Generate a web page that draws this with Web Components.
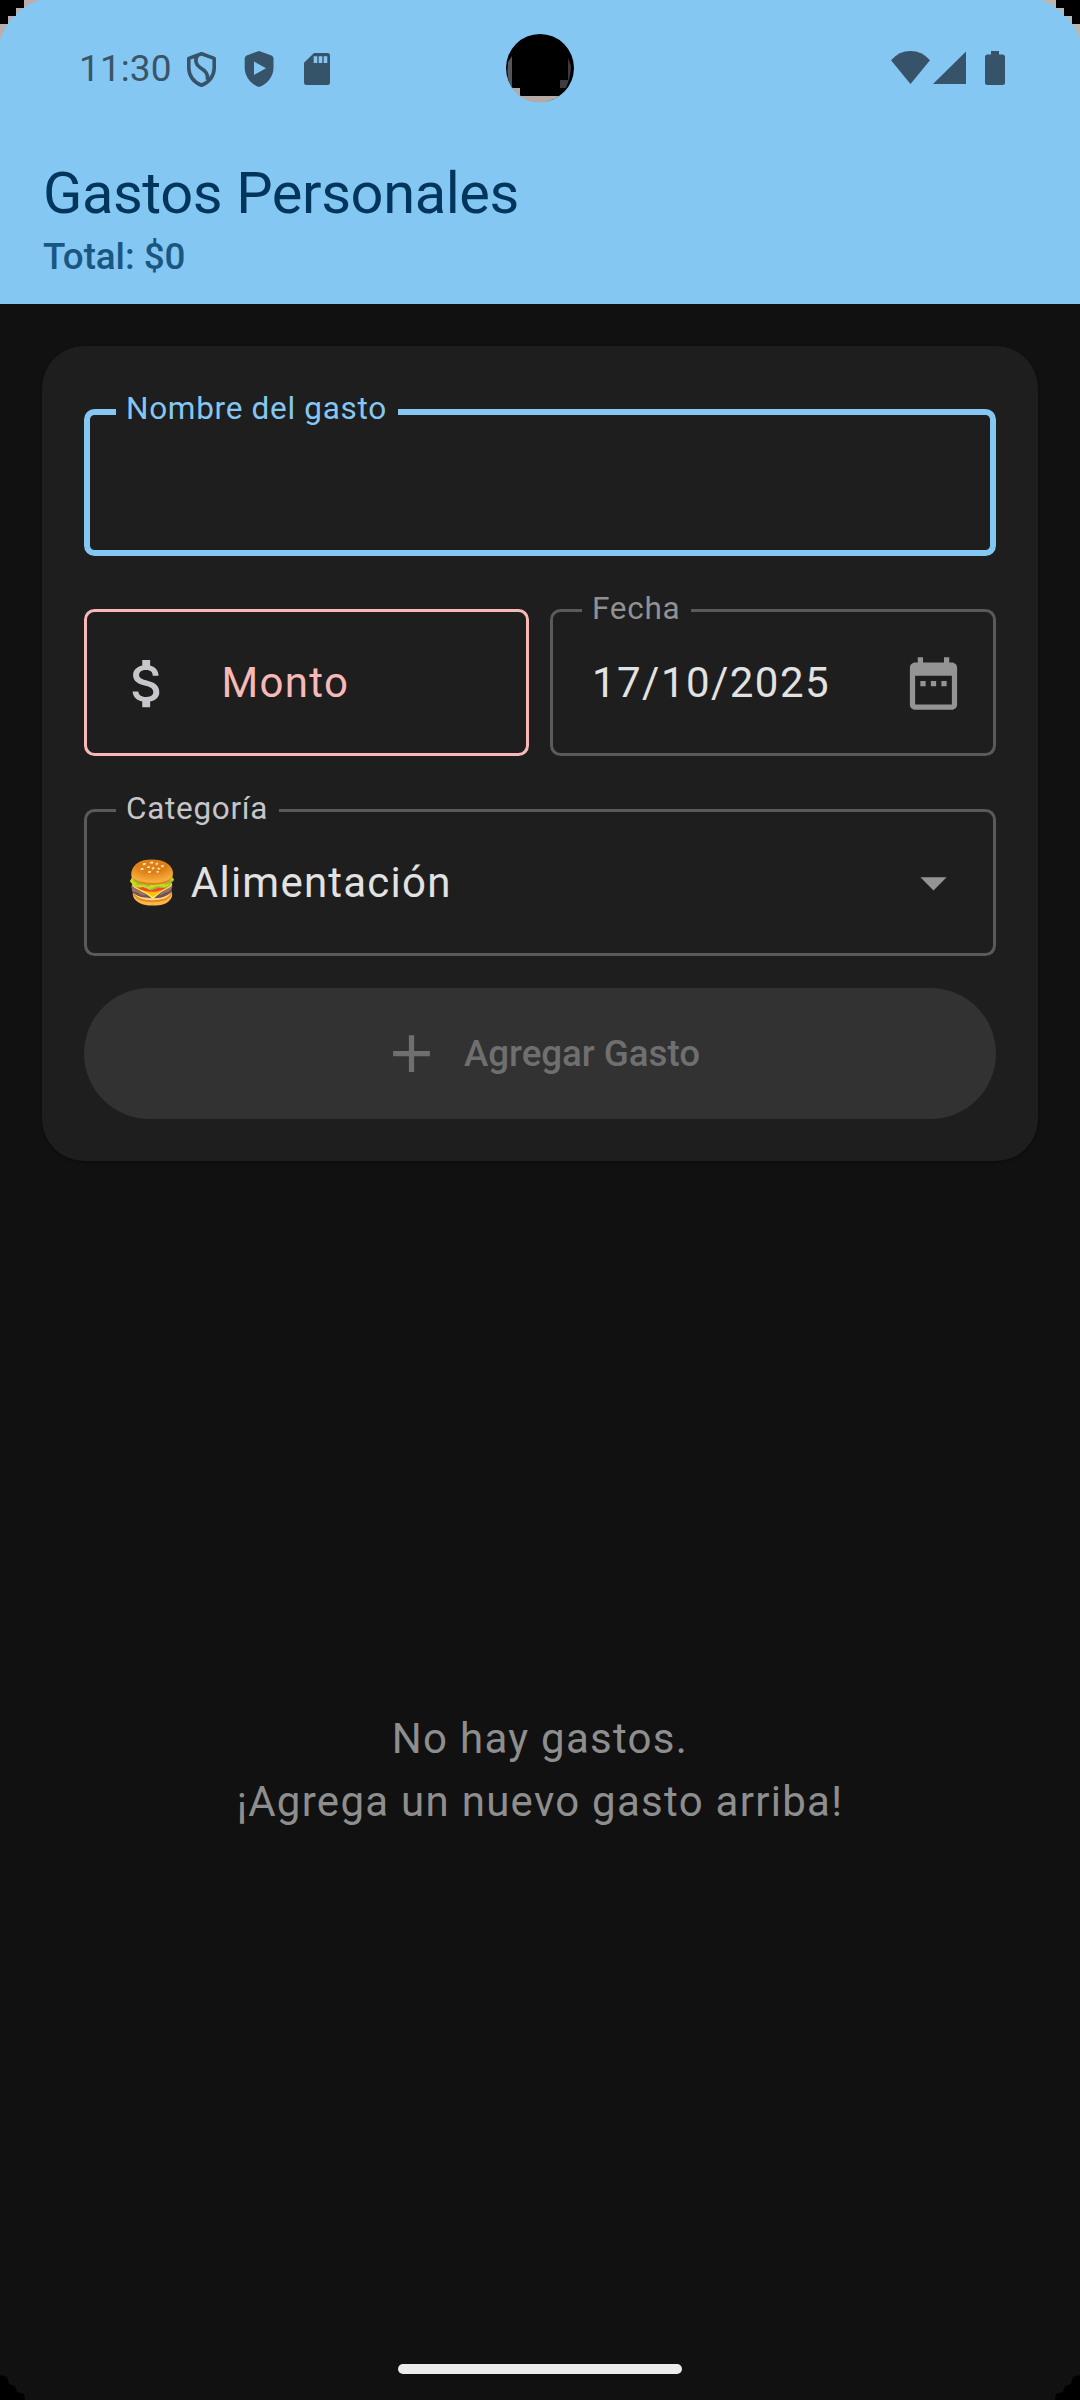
<!DOCTYPE html>
<html lang="es">
<head>
<meta charset="utf-8">
<title>Gastos Personales</title>
<style>
html,body{margin:0;background:#000}
body{font-family:Roboto,"Noto Sans",sans-serif;width:1080px;height:2400px;overflow:hidden}
</style>
</head>
<body>
<gastos-app></gastos-app>
<script>
const define = (name, html) => customElements.define(name, class extends HTMLElement {
  constructor() {
    super();
    const t = document.createElement('template');
    t.innerHTML = html;
    this.attachShadow({mode: 'open'}).append(t.content.cloneNode(true));
  }
});

const ICONS = {
  money: 'M11.8 10.9c-2.27-.59-3-1.2-3-2.15 0-1.09 1.01-1.85 2.7-1.85 1.78 0 2.44.85 2.5 2.1h2.21c-.07-1.72-1.12-3.3-3.21-3.81V3h-3v2.16c-1.94.42-3.5 1.68-3.5 3.61 0 2.31 1.91 3.46 4.7 4.13 2.5.6 3 1.48 3 2.41 0 .69-.49 1.79-2.7 1.79-2.06 0-2.87-.92-2.98-2.1h-2.2c.12 2.19 1.76 3.42 3.68 3.83V21h3v-2.15c1.95-.37 3.5-1.5 3.5-3.55 0-2.84-2.43-3.81-4.7-4.4z',
  date: 'M9 11H7v2h2v-2zm4 0h-2v2h2v-2zm4 0h-2v2h2v-2zm2-7h-1V2h-2v2H8V2H6v2H5c-1.11 0-1.99.9-1.99 2L3 20c0 1.1.89 2 2 2h14c1.1 0 2-.9 2-2V6c0-1.1-.9-2-2-2zm0 16H5V9h14v11z',
  drop: 'M7 10l5 5 5-5z',
  add: 'M19 13h-6v6h-2v-6H5v-2h6V5h2v6h6v2z'
};

customElements.define('md-icon', class extends HTMLElement {
  constructor() {
    super();
    this.attachShadow({mode: 'open'});
  }
  connectedCallback() {
    this.shadowRoot.innerHTML = `<style>:host{display:block;width:63px;height:63px;flex:none}svg{display:block}</style>
      <svg width="63" height="63" viewBox="0 0 24 24" fill="currentColor"><path d="${ICONS[this.getAttribute('name')]}"/></svg>`;
  }
});

define('status-bar', `<style>
:host{display:flex;height:136px;box-sizing:border-box;padding:51px 74px 0 79px;color:#365369;justify-content:space-between;align-items:flex-start}
.l,.r{display:flex;align-items:flex-start}
.time{font-size:37px;line-height:35px;letter-spacing:.1px;width:108px;white-space:nowrap;color:#3b5568}
svg{display:block;overflow:visible}
</style>
<div class="l"><span class="time">11:30</span>
<svg width="150" height="38" viewBox="187 51 150 38">
 <g fill="none" stroke="currentColor" stroke-width="3.6" stroke-linejoin="round"><path d="M201.500 53.700L214.200 58.400V68C214.200 76 209 82.500 201.500 85.200C194 82.500 188.800 76 188.800 68V58.400Z"/><path d="M197.500 55.500C194.500 60 196 65 200 67.500C205 70.500 208.500 73.500 207.500 80"/></g>
 <path fill="currentColor" fill-rule="evenodd" d="M259 51L271.500 55.600Q273.500 56.400 273.500 58.500V67.500C273.500 76.500 267.500 84 259 87C250.500 84 244.700 76.500 244.700 67.500V58.500Q244.700 56.400 246.700 55.600ZM254 61.500V75L266 68.200Z"/>
 <path fill="currentColor" fill-rule="evenodd" d="M314 53H327.500Q330 53 330 55.500V82.500Q330 85 327.500 85H306.500Q304 85 304 82.500V62.800ZM313.700 56.300V63H317.300V56.300ZM318.700 56.300V63H322.300V56.300ZM323.700 56.300V63H327.300V56.300Z"/>
</svg></div>
<svg class="r" width="116" height="36" viewBox="890 51 116 36" fill="currentColor">
 <path d="M891 60.300Q899 51 910.500 51Q922 51 930 60.300L910.500 84Z"/>
 <path d="M966 51.500V84H933Z"/>
 <path d="M991 51H999V54.500H1002.500Q1005 54.500 1005 57V82.500Q1005 85 1002.500 85H987.500Q985 85 985 82.500V57Q985 54.500 987.500 54.500H991Z"/>
</svg>`);

define('app-header', `<style>
:host{display:block;height:304px;background:#85c7f3}
.t{padding:21px 0 0 43px;color:#00355c}
h1{margin:0;font-weight:400;font-size:57.750px;line-height:73.500px;letter-spacing:-.4px}
p{margin:0;font-weight:500;font-size:36.750px;line-height:52.500px;letter-spacing:-.05px;color:#195782}
</style><slot></slot><div class="t"><h1><slot name="title"></slot></h1><p><slot name="sub"></slot></p></div>`);

define('outlined-field', `<style>
:host{display:block;position:relative;height:147px;flex:1;min-width:0;font-size:42px;letter-spacing:var(--ls,1.3125px);color:var(--ink,#e2e2e2)}
fieldset{box-sizing:border-box;position:absolute;inset:var(--top,-16px) 0 0 0;margin:0;padding:0 var(--pad,29px);min-width:0;border:var(--bw,3px) solid var(--line,#5a5a5a);border-radius:10.500px}
legend{display:block;padding:0 11px 0 10px;height:35px;font-size:31.500px;line-height:var(--lh,31px);letter-spacing:.7px;color:var(--label,#919191);white-space:nowrap}
.row{position:relative;display:flex;align-items:center;height:100%;box-sizing:border-box;padding:0 31.500px 0 42px}
.v{flex:1;white-space:pre;line-height:63px}
:host([bare]) fieldset{inset:0}
:host([bare]) legend{display:none}
:host([bare]) .row{padding-left:31.500px;gap:43px}
</style><fieldset><legend><slot name="label"></slot></legend></fieldset>
<div class="row"><slot name="lead"></slot><span class="v"><slot></slot></span><slot name="trail"></slot></div>`);

define('filled-button', `<style>
:host{display:flex;height:131px;border-radius:66px;background:#323232;color:#6f6f70;align-items:center;justify-content:center;gap:21px;font-weight:500;font-size:36.750px;letter-spacing:-.05px}
</style><slot name="icon"></slot><span><slot></slot></span>`);

define('expense-form', `<style>
:host{display:block;box-sizing:border-box;margin:42px 42px 0;height:815px;padding:63px 42px 0;border-radius:42px;background:#1e1e1e;box-shadow:0 1px 3px #0006}
.c{display:flex;flex-direction:column}
.c>*{flex:none}
.row{display:flex;gap:21px;margin:53px 0}
.name{--bw:6px;--top:-14.5px;--lh:28px;--pad:26px;--line:#85c7f3;--label:#85c7f3}
.amt{--line:#f6b9b7;--ink:#f6b9b7;flex:0 0 445px}
.amt md-icon{color:#c8c6ca;margin-top:2px}
.date{--ls:1.45px}
.date md-icon,.cat md-icon{color:#949494}
.date md-icon{margin-top:2px}
.cat{--label:#c6c5c9;--ls:1.22px;margin-bottom:32px}
</style><div class="c">
<outlined-field class="name"><span slot="label">Nombre del gasto</span></outlined-field>
<div class="row">
<outlined-field class="amt" bare><md-icon slot="lead" name="money"></md-icon>Monto</outlined-field>
<outlined-field class="date"><span slot="label">Fecha</span>17/10/2025<md-icon slot="trail" name="date"></md-icon></outlined-field>
</div>
<outlined-field class="cat"><span slot="label">Categoría</span>🍔 Alimentación<md-icon slot="trail" name="drop"></md-icon></outlined-field>
<filled-button><md-icon slot="icon" name="add"></md-icon>Agregar Gasto</filled-button>
</div>`);

define('empty-state', `<style>
:host{flex:1;display:flex;align-items:center;justify-content:center;padding-top:42px;text-align:center;font-size:42px;line-height:63px;letter-spacing:1.28px;color:#8e8e8e}
p{margin:0}
</style><p><slot></slot></p>`);

define('device-cutouts', `<style>
:host{position:absolute;inset:0;pointer-events:none}
svg{display:block}
</style><svg width="1080" height="2400" viewBox="0 0 1080 2400">
<g><path fill="#b9aeab" d="M0 0H40Q10 10 0 40Z"/><path d="M0 0H24V8H16V16H8V24H0Z"/></g>
<g transform="translate(1080 0) scale(-1 1)"><path fill="#b9b7b0" d="M0 0H40Q10 10 0 40Z"/><path d="M0 0H24V8H16V16H8V24H0Z"/></g>
<circle cx="540" cy="68" r="34"/>
<path fill="#b5aaa5" d="M512 88H520V96H560L565 91Q555 102 540 102.500Q522 102 512 88Z"/>
<path fill="#56555b" d="M508 62L512 56V88Q507 80 507.500 70Z"/>
<path fill="#3d3a40" d="M568 58L571 66Q571 76 566 88H560V80H568Z"/>
<path d="M0 2375L7 2377L9 2384L15 2386L17 2392L24 2394L25 2400H0ZM1080 2375L1073 2377L1071 2384L1065 2386L1063 2392L1056 2394L1055 2400H1080Z"/>
</svg>`);

define('gastos-app', `<style>
:host{display:flex;flex-direction:column;position:relative;width:1080px;height:2400px;background:#111;overflow:hidden}
.nav{height:63px;flex:none;display:flex;justify-content:center;align-items:flex-start;box-sizing:border-box;padding-top:27px}
.nav i{width:284px;height:10px;border-radius:5px;background:#ececec}
</style>
<app-header><status-bar></status-bar><span slot="title">Gastos Personales</span><span slot="sub">Total: $0</span></app-header>
<expense-form></expense-form>
<empty-state>No hay gastos.<br>¡Agrega un nuevo gasto arriba!</empty-state>
<div class="nav"><i></i></div>
<device-cutouts></device-cutouts>`);
</script>
</body>
</html>
